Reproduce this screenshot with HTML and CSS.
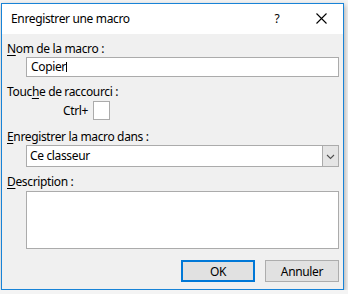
FILE: index.html
```html
<!DOCTYPE html>
<html lang="fr">
<head>
<meta charset="UTF-8">
<title>Enregistrer une macro</title>
<link rel="stylesheet" href="styles.css">
</head>
<body>
<div class="dialog">
    <div class="dialog-title">
        <span class="title-text">Enregistrer une macro</span>
        <span class="help-btn">?</span>
        <span class="close-btn">
            <svg width="11" height="11" viewBox="0 0 11 11"><path d="M0.5 0.5 L10.5 10.5 M10.5 0.5 L0.5 10.5" stroke="#000" stroke-width="1.1" fill="none"/></svg>
        </span>
    </div>
    <div class="dialog-body">
        <div class="field-label"><u>N</u>om de la macro :</div>
        <div class="text-field">Copier<span class="caret"></span></div>

        <div class="field-label spaced">Touc<u>h</u>e de raccourci :</div>
        <div class="shortcut-row">
            <span class="ctrl-label">Ctrl+</span>
            <span class="key-box"></span>
        </div>

        <div class="field-label spaced-lg"><u>E</u>nregistrer la macro dans :</div>
        <div class="select-field">
            <span class="select-value">Ce classeur</span>
            <span class="select-arrow">
                <svg width="9" height="6" viewBox="0 0 9 6"><path d="M1 1 L4.5 4.5 L8 1" stroke="#505050" stroke-width="1.1" fill="none"/></svg>
            </span>
        </div>

        <div class="field-label spaced"><u>D</u>escription :</div>
        <div class="text-area"></div>

        <div class="dialog-buttons">
            <button class="btn btn-default">OK</button>
            <button class="btn">Annuler</button>
        </div>
    </div>
</div>
</body>
</html>
```

FILE: styles.css
```css
body {
    margin: 0;
    background-color: #f4f4f4;
    font-family: "Noto Sans", "Open Sans", sans-serif;
    font-size: 12px;
    letter-spacing: -0.35px;
    color: #000000;
}
.dialog {
    margin: 3px 0 0 1px;
    width: 343px;
    height: 287px;
    box-sizing: border-box;
    border: 1px solid #1883d7;
    background-color: #f0f0f0;
    box-shadow: 1px 2px 5px rgba(0, 0, 0, 0.3);
    display: flex;
    flex-direction: column;
}
.dialog-title {
    height: 30px;
    background-color: #ffffff;
    display: flex;
    align-items: center;
    padding-left: 9px;
}
.title-text {
    flex: 1;
    line-height: 30px;
}
.help-btn {
    width: 20px;
    text-align: center;
    margin-right: 29px;
    padding-bottom: 1px;
}
.close-btn {
    width: 11px;
    height: 11px;
    margin-right: 16px;
    margin-top: -1px;
    display: flex;
}
.dialog-body {
    flex: 1;
    padding: 7px 4px 0 5px;
    display: flex;
    flex-direction: column;
}
.field-label {
    line-height: 16px;
}
.field-label u {
    text-decoration-thickness: 1px;
    text-underline-offset: 2px;
}
.field-label.spaced {
    margin-top: 7px;
}
.field-label.spaced-lg {
    margin-top: 9px;
}
.text-field {
    margin-left: 19px;
    height: 20px;
    box-sizing: border-box;
    border: 1px solid #ababab;
    background-color: #ffffff;
    padding-left: 4px;
    line-height: 18px;
    display: flex;
    align-items: center;
}
.caret {
    display: inline-block;
    width: 1px;
    height: 10px;
    background-color: #000000;
    margin-left: 0.5px;
}
.shortcut-row {
    display: flex;
    align-items: center;
    margin-top: 1px;
    padding-left: 56px;
}
.ctrl-label {
    width: 30px;
}
.key-box {
    width: 17px;
    height: 19px;
    box-sizing: border-box;
    border: 1px solid #ababab;
    background-color: #ffffff;
}
.select-field {
    margin-left: 19px;
    height: 22px;
    box-sizing: border-box;
    border: 1px solid #ababab;
    background-color: #ffffff;
    display: flex;
    align-items: stretch;
}
.select-value {
    flex: 1;
    padding-left: 3px;
    line-height: 20px;
}
.select-arrow {
    width: 16px;
    box-sizing: border-box;
    border-left: 1px solid #ababab;
    background-color: #e5e5e5;
    display: flex;
    align-items: center;
    justify-content: center;
    padding-top: 1px;
}
.text-area {
    margin-left: 19px;
    margin-top: 1px;
    height: 58px;
    box-sizing: border-box;
    border: 1px solid #ababab;
    background-color: #ffffff;
}
.dialog-buttons {
    display: flex;
    justify-content: flex-end;
    gap: 10px;
    margin-top: 11px;
}
.btn {
    width: 74px;
    height: 22px;
    box-sizing: border-box;
    border: 1px solid #adadad;
    background-color: #e1e1e1;
    font-family: "Noto Sans", "Open Sans", sans-serif;
    font-size: 12px;
    letter-spacing: -0.35px;
    color: #000000;
    padding: 0;
}
.btn-default {
    border: 2px solid #0078d7;
}
```
